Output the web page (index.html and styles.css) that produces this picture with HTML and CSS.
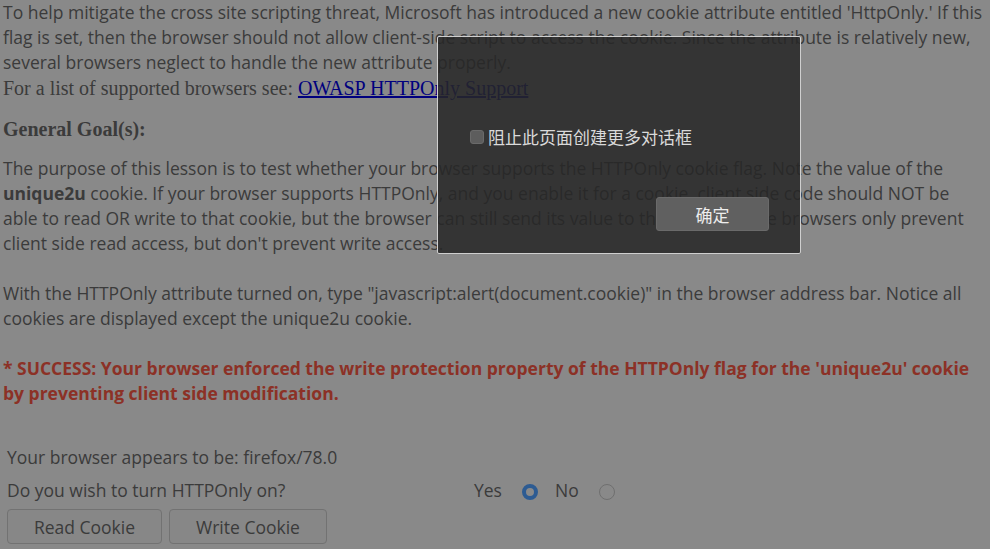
FILE: index.html
```html
<!DOCTYPE html>
<html>
<head>
<meta charset="utf-8">
<link rel="stylesheet" href="styles.css">
</head>
<body>
<div class="lesson">
  <p class="intro">To help mitigate the cross site scripting threat, Microsoft has introduced a new cookie attribute entitled 'HttpOnly.' If this flag is set, then the browser should not allow client-side script to access the cookie. Since the attribute is relatively new, several browsers neglect to handle the new attribute properly.</p>
  <p class="serif">For a list of supported browsers see: <a href="#">OWASP HTTPOnly Support</a></p>
  <h3 class="goal">General Goal(s):</h3>
  <p class="body">The purpose of this lesson is to test whether your browser supports the HTTPOnly cookie flag. Note the value of the <b>unique2u</b> cookie. If your browser supports HTTPOnly, and you enable it for a cookie, client side code should NOT be able to read OR write to that cookie, but the browser can still send its value to the server. Some browsers only prevent client side read access, but don't prevent write access.<br><br>With the HTTPOnly attribute turned on, type "javascript:alert(document.cookie)" in the browser address bar. Notice all cookies are displayed except the unique2u cookie.<br><br><span class="success">* SUCCESS: Your browser enforced the write protection property of the HTTPOnly flag for the 'unique2u' cookie by preventing client side modification.</span></p>
  <div class="form">
    <div class="row">Your browser appears to be: firefox/78.0</div>
    <div class="row">
      <span class="question">Do you wish to turn HTTPOnly on?</span>
      <span class="choices">
        <span>Yes</span><span class="radio checked"></span>
        <span>No</span><span class="radio"></span>
      </span>
    </div>
    <div class="buttons">
      <button class="btn read">Read Cookie</button>
      <button class="btn write">Write Cookie</button>
    </div>
  </div>
</div>
<div class="dialog">
  <label class="dlg-check"><span class="box"></span>阻止此页面创建更多对话框</label>
  <div class="dlg-actions"><button class="ok">确定</button></div>
</div>
</body>
</html>
```
FILE: styles.css
```css
html, body {
  margin: 0;
  padding: 0;
  background: #898989;
  height: 100%;
  overflow: hidden;
}
body {
  font-family: "Open Sans", "Liberation Sans", sans-serif;
  font-size: 17.5px;
  line-height: 25px;
  color: #3b3b3b;
}
.lesson {
  padding: 0 3px;
}
p {
  margin: 0;
}
.serif {
  font-family: "Liberation Serif", serif;
  font-size: 20px;
  line-height: 25px;
  margin-top: 1px;
}
.serif a {
  color: #00007e;
}
.goal {
  font-family: "Liberation Serif", serif;
  font-weight: bold;
  font-size: 20px;
  line-height: 25px;
  margin: 16px 0 0;
}
.body {
  margin-top: 14px;
}
.body b {
  font-weight: bold;
}
.success {
  color: #8c3126;
  font-weight: bold;
}
.form {
  margin-top: 35px;
  padding-left: 4px;
  font-size: 17.5px;
  color: #3b3b3b;
}
.row {
  display: flex;
  align-items: center;
  height: 33px;
}
.question {
  width: 467px;
}
.choices {
  display: flex;
  align-items: center;
}
.radio {
  display: inline-block;
  box-sizing: border-box;
  width: 16px;
  height: 16px;
  border-radius: 50%;
  border: 1px solid #6f6f6f;
  margin: 2px 17px 0 20px;
}
.radio.checked {
  border: 4px solid #2d5b92;
  background: #8a8a8a;
}
.buttons {
  display: flex;
  gap: 7px;
  margin-top: 2px;
}
.btn {
  font-family: "Open Sans", "Liberation Sans", sans-serif;
  font-size: 17.5px;
  color: #3b3b3b;
  background: #878787;
  border: 1px solid #727272;
  border-radius: 4px;
  height: 35px;
  padding: 0;
}
.btn.read { width: 155px; }
.btn.write { width: 158px; }
.dialog {
  position: absolute;
  left: 437px;
  top: 36px;
  width: 362px;
  height: 216px;
  background: rgba(38, 38, 38, 0.86);
  border: 1px solid #cfcfcf;
  border-radius: 2px;
  display: flex;
  flex-direction: column;
  color: #dadada;
  font-family: "Noto Sans CJK SC", sans-serif;
}
.dlg-check {
  display: flex;
  align-items: center;
  margin: 88px 0 0 32px;
  font-size: 17px;
  line-height: 24px;
}
.box {
  display: inline-block;
  box-sizing: border-box;
  width: 14px;
  height: 14px;
  background: #5d5d5d;
  border: 1px solid #6a6a6a;
  border-radius: 3px;
  margin-right: 4px;
}
.dlg-actions {
  display: flex;
  justify-content: flex-end;
  margin: 48px 31px 0 0;
}
.ok {
  width: 113px;
  height: 34px;
  background: #606060;
  border: 1px solid #6a6a6a;
  border-radius: 3px;
  color: #ededed;
  font-family: "Noto Sans CJK SC", sans-serif;
  font-size: 17px;
  padding: 0;
}
```
